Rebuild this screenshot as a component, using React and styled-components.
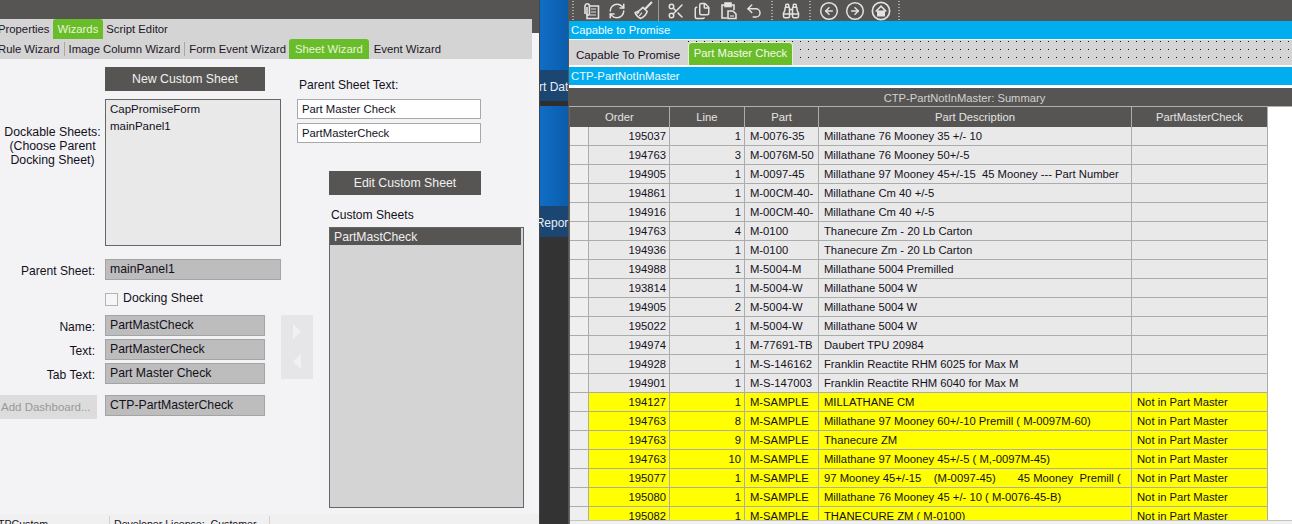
import React from "react";
import styled, { createGlobalStyle } from "styled-components";
import { RefreshCw, Scissors, Files, Undo2, Binoculars, CircleArrowLeft, CircleArrowRight } from "lucide-react";

const Global = createGlobalStyle`
  html, body { margin: 0; padding: 0; background: #fff; overflow: hidden; }
  #root { width: 1292px; height: 524px; overflow: hidden; }
  * { box-sizing: border-box; }
`;

const Page = styled.div`
  display: flex; width: 1292px; height: 524px; overflow: hidden;
  font-family: "Liberation Sans", Arial, sans-serif; font-size: 11.5px; color: #14101c;
`;

/* left window */
const LeftWindow = styled.div`
  width: 539px; flex: none; display: flex; flex-direction: column; background: #f3f3f5;
`;
const Upper = styled.div`display: flex; height: 514px;`;
const Main = styled.div`width: 532px; flex: none; display: flex; flex-direction: column;`;
const Gutter = styled.div`
  flex: 1; background: linear-gradient(#575553 33px, #f5f5f7 33px);
`;
const TitleBar = styled.div`height: 19px; background: #575553; flex: none;`;
const TabRow = styled.div`
  display: flex; align-items: stretch; flex: none; background: #d4d4d4; overflow: hidden;
  height: 20px; font-size: 11.3px;
`;
const WizardTab = styled.div`
  display: flex; align-items: center; white-space: nowrap; padding: 0 ${p => p.$pad || 3}px;
  margin-left: ${p => p.$ml || 0}px;
  background: ${p => (p.$active ? "#6abd2a" : "transparent")};
  color: ${p => (p.$active ? "#e6f5d6" : "#1c1626")};
  border-radius: ${p => (p.$active ? "3px 3px 0 0" : "0")};
`;
const TabSep = styled.span`width: 1px; background: #aba89f; margin: 3px 1px; flex: none;`;
const FormPane = styled.div`flex: 1; display: grid; grid-template-columns: 297px 1fr; background: #f3f3f5;`;
const FormLeft = styled.div`display: flex; flex-direction: column; padding-top: 8px;`;
const FormRight = styled.div`display: flex; flex-direction: column; padding-top: 19px;`;
const DarkButton = styled.div`
  display: flex; align-items: center; justify-content: center; flex: none;
  height: 24px; width: ${p => p.$w}px; margin-left: ${p => p.$ml}px; margin-top: ${p => p.$mt || 0}px;
  background: #575553; color: #f0f0f0; font-size: 12.3px;
`;
const DockRow = styled.div`display: flex; margin-top: 8px; align-items: flex-start;`;
const DockLabel = styled.div`
  width: 105px; flex: none; text-align: center; line-height: 14px; font-size: 12.3px; padding-top: 26px;
`;
const SheetList = styled.div`
  width: ${p => p.$w}px; height: ${p => p.$h}px; flex: none; border: 1px solid #666;
  background: ${p => p.$bg}; margin-left: ${p => p.$ml || 0}px; margin-top: ${p => p.$mt || 0}px; padding: ${p => p.$pad || 0};
`;
const ListItem = styled.div`height: 17px; line-height: 17px; padding-left: 4px; white-space: nowrap;`;
const SelectedItem = styled.div`
  height: 17px; line-height: 19px; padding-left: 4px; background: #575553; color: #eee; margin-right: 2px; font-size: 12.2px; overflow: hidden;
`;
const FieldRow = styled.div`display: flex; align-items: center; margin-top: ${p => p.$mt || 0}px;`;
const FieldLabel = styled.div`
  width: 95px; margin-right: 10px; flex: none; text-align: right; white-space: nowrap; padding-top: 3px; font-size: 12.1px;
`;
const ReadField = styled.div`
  width: ${p => p.$w}px; height: 21px; flex: none; background: #bdbdbd; border: 1px solid #a4a4a4;
  padding-left: 4px; line-height: 19px; font-size: 12.25px; white-space: nowrap;
`;
const CheckRow = styled.div`display: flex; align-items: flex-start; margin: 13px 0 0 105px; height: 13px;`;
const CheckBox = styled.div`width: 13px; height: 13px; border: 1px solid #b4b4b4; background: #f6f6f6; flex: none; margin-right: 5px;`;
const CheckText = styled.div`line-height: 11px; white-space: nowrap; font-size: 12.3px;`;
const NameBlock = styled.div`display: flex; margin-top: 9px;`;
const NameFields = styled.div`display: flex; flex-direction: column; gap: 3px; flex: none;`;
const MoveButtons = styled.div`
  width: 32px; height: 64px; flex: none; margin-left: 16px; background: #e6e6e8; padding: 9px 0 10px;
  display: flex; flex-direction: column; align-items: center; justify-content: space-between;
`;
const GhostButton = styled.div`
  width: 97px; height: 24px; flex: none; margin-right: 8px; background: #dcdcdc; color: #999;
  display: flex; align-items: center; padding-left: 1px; white-space: nowrap; align-self: flex-start;
`;
const DashRow = styled.div`display: flex; align-items: flex-start; margin-top: 11px;`;
const RightLabel = styled.div`height: 14px; line-height: 14px; margin-left: 2px; white-space: nowrap; font-size: 12.1px; margin-top: ${p => p.$mt || 0}px; padding-left: ${p => p.$pl || 0}px;`;
const TextInput = styled.div`
  width: 184px; height: 20px; background: #fff; border: 1px solid #a8a8a8; padding-left: 4px; font-size: 11.3px;
  line-height: 18px; margin-top: ${p => p.$mt}px;
`;
const StatusBar = styled.div`
  height: 10px; flex: none; background: #f0f0f0; display: flex; overflow: hidden; line-height: 16px; font-size: 10.6px;
`;
const StatusCell = styled.div`
  width: ${p => p.$w}px; flex: none; padding-left: ${p => p.$pl}px; margin-left: ${p => p.$ml || 0}px; white-space: pre;
  border-right: 1px solid #d0d0d0; margin-top: 2px;
`;

/* rail */
const Rail = styled.div`width: 30px; flex: none; display: flex; flex-direction: column; background: #333; border-left: 1px solid #444; border-right: 1px solid #555;`;
const RailBlue = styled.div`height: ${p => p.$h}px; flex: none; background: linear-gradient(90deg, #0f6ec6, #0c5cab);`;
const RailNav = styled.div`
  height: 31px; flex: none; background: #1b4672; color: #e8eef5; font-size: 12px; padding-top: 3px;
  display: flex; align-items: center; justify-content: center; white-space: nowrap;
  overflow: ${p => (p.$clip ? "hidden" : "visible")};
`;
const RailGap = styled.div`height: 5px; flex: none; background: #2e2e2e;`;
const RailText = styled.span`margin-left: ${p => p.$ml || 0}px; flex: none;`;

/* right window */
const RightWindow = styled.div`position: relative; flex: 1; display: flex; flex-direction: column; background: #fff; min-width: 0; font-size: 11.3px;`;
const Toolbar = styled.div`height: 21px; flex: none; background: #575553; display: flex; align-items: center; color: #e2e2e2;`;
const ToolIcon = styled.div`width: 26px; height: 21px; flex: none; display: flex; align-items: center; justify-content: center;`;
const Grip = styled.div`
  width: 2px; height: 19px; flex: none; margin: 0 ${p => p.$mr}px 0 ${p => p.$ml}px;
  background: repeating-linear-gradient(#a8a8a8 0 1px, transparent 1px 3px);
`;
const ToolSep = styled.div`width: 1px; height: 21px; background: #9a9a9a; flex: none; margin: 0 4px 0 2px;`;
const BlueBar = styled.div`
  height: 18px; flex: none; background: #00aeef; color: #f2fbff; line-height: 18px; padding-left: 2px;
  margin-bottom: ${p => p.$mb}px;
`;
const SheetTabs = styled.div`
  height: 25px; flex: none; background-color: #d4d4d4; display: flex; margin-bottom: 2px;
  background-image: conic-gradient(at 1px 1px, transparent 75%, #111 0);
  background-size: 8px 8px; background-position: 7px 1px;
`;
const PlainTab = styled.div`
  width: 119px; flex: none; background: #d4d4d4; line-height: 30px; padding-left: 7px; white-space: nowrap; font-size: 11.6px;
`;
const ActiveSheetTab = styled.div`
  width: 105px; flex: none; margin-top: 2px; background: #6abd2a; color: #f4fbec;
  border: 1px solid #e4f3d4; border-bottom: none; border-radius: 4px 4px 0 0; text-align: center; line-height: 20px; white-space: nowrap;
`;
const GridArea = styled.div`flex: 1; display: flex; flex-direction: column; min-height: 0; margin-top: 1px;`;
const GridTitle = styled.div`
  height: 19px; flex: none; background: #575553; color: #d2d2d2; line-height: 20px; text-align: center; padding-left: 68px;
  border-bottom: 1px solid #b0b0b0; font-size: 11.2px;
`;
const GridBody = styled.div`flex: 1; display: flex; flex-direction: column; min-height: 0; border-left: 1px solid #666; font-size: 11.25px;`;
const COLS = "19px 81px 75px 74px 313px 136px";
const LINE = "#acacac";
const HeadRow = styled.div`
  display: grid; grid-template-columns: ${COLS}; width: 698px; height: 20px; flex: none; background: #575553; color: #e4e4e4;
`;
const HeadCell = styled.div`
  text-align: center; line-height: 20px; border-right: 1px solid ${LINE}; border-bottom: 1px solid ${LINE};
  grid-column: span ${p => p.$span || 1};
`;
const Rows = styled.div`height: 393px; overflow: hidden; flex: none;`;
const Row = styled.div`
  display: grid; grid-template-columns: ${COLS}; width: 698px; height: 19px;
  background: ${p => (p.$warn ? "#ffff00" : "#e9e9e9")};
`;
const Selector = styled.div`background: #efefef; border-right: 1px solid ${LINE}; border-bottom: 1px solid ${LINE};`;
const Cell = styled.div`
  line-height: 18px; overflow: hidden; white-space: pre; border-right: 1px solid ${LINE}; border-bottom: 1px solid ${LINE};
  text-align: ${p => (p.$num ? "right" : "left")};
  padding: ${p => (p.$num ? "0 3px 0 0" : "0 0 0 5px")};
`;
const GridFoot = styled.div`flex: 1; background: #f0f0f0; border-top: 1px solid #c4c4c4;`;

const Triangle = ({ dir }) => (
  <svg width="8" height="15" viewBox="0 0 8 15"><polygon points={dir === "r" ? "0,0 8,7.500 0,15" : "8,0 0,7.500 8,15"} fill="#f1f1f3" /></svg>
);

const DocClip = () => (
  <svg width="18" height="18" viewBox="0 0 18 18" fill="none" stroke="currentColor" strokeWidth="1.6">
    <path d="M8 4h8.500v12.500H5v-5" /><path d="M9 7h5M9 10h5M8 13h6" strokeWidth="1.200" />
    <path d="M3 12V4a2.200 2.200 0 0 1 4.400 0v8a1.200 1.200 0 0 1-2.400 0V5" />
  </svg>
);
const Broom = () => (
  <svg width="19" height="19" viewBox="0 0 18 18" fill="none" stroke="currentColor" strokeWidth="1.500" strokeLinejoin="round">
    <path d="M17 1l-6.500 6.500" strokeWidth="2" />
    <path d="M8.500 6l4 4c-1 3-4 5.500-6 6.500C4 15.500 2 13.500 1 11c2.500-.5 5-2.500 7.500-5z" />
    <path d="M5 14l2.500-3M3 12l2-1.500" strokeWidth="1.100" />
  </svg>
);
const ClipDoc = () => (
  <svg width="18" height="18" viewBox="0 0 18 18" fill="none" stroke="currentColor" strokeWidth="1.600">
    <path d="M6 3H3v13h5" /><path d="M12 3h3v5" /><rect x="6" y="1" width="6" height="3.500" fill="currentColor" />
    <path d="M9 9h5l3 3v4.500H9z" fill="#575553" /><path d="M11 14h4" strokeWidth="1.100" />
  </svg>
);
const HomeCircle = () => (
  <svg width="20" height="20" viewBox="0 0 19 19" fill="none" stroke="currentColor" strokeWidth="1.600">
    <circle cx="9.500" cy="9.500" r="8.200" />
    <path d="M4.500 10l5-5 5 5" strokeWidth="1.600" /><path d="M6.500 9v5h6V9" fill="currentColor" />
  </svg>
);

const gray = [
  ["195037", "1", "M-0076-35", "Millathane 76 Mooney 35 +/- 10", ""],
  ["194763", "3", "M-0076M-50", "Millathane 76 Mooney 50+/-5", ""],
  ["194905", "1", "M-0097-45", "Millathane 97 Mooney 45+/-15  45 Mooney --- Part Number", ""],
  ["194861", "1", "M-00CM-40-", "Millathane Cm 40 +/-5", ""],
  ["194916", "1", "M-00CM-40-", "Millathane Cm 40 +/-5", ""],
  ["194763", "4", "M-0100", "Thanecure Zm - 20 Lb Carton", ""],
  ["194936", "1", "M-0100", "Thanecure Zm - 20 Lb Carton", ""],
  ["194988", "1", "M-5004-M", "Millathane 5004 Premilled", ""],
  ["193814", "1", "M-5004-W", "Millathane 5004 W", ""],
  ["194905", "2", "M-5004-W", "Millathane 5004 W", ""],
  ["195022", "1", "M-5004-W", "Millathane 5004 W", ""],
  ["194974", "1", "M-77691-TB", "Daubert TPU 20984", ""],
  ["194928", "1", "M-S-146162", "Franklin Reactite RHM 6025 for Max M", ""],
  ["194901", "1", "M-S-147003", "Franklin Reactite RHM 6040 for Max M", ""],
];
const NP = "Not in Part Master";
const warn = [
  ["194127", "1", "M-SAMPLE", "MILLATHANE CM", NP],
  ["194763", "8", "M-SAMPLE", "Millathane 97 Mooney 60+/-10 Premill ( M-0097M-60)", NP],
  ["194763", "9", "M-SAMPLE", "Thanecure ZM", NP],
  ["194763", "10", "M-SAMPLE", "Millathane 97 Mooney 45+/-5 ( M,-0097M-45)", NP],
  ["195077", "1", "M-SAMPLE", "97 Mooney 45+/-15    (M-0097-45)       45 Mooney  Premill (", NP],
  ["195080", "1", "M-SAMPLE", "Millathane 76 Mooney 45 +/- 10 ( M-0076-45-B)", NP],
  ["195082", "1", "M-SAMPLE", "THANECURE ZM ( M-0100)", NP],
];

const DataRow = ({ r, w }) => (
  <Row $warn={w}>
    <Selector />
    <Cell $num>{r[0]}</Cell>
    <Cell $num>{r[1]}</Cell>
    <Cell>{r[2]}</Cell>
    <Cell>{r[3]}</Cell>
    <Cell>{r[4]}</Cell>
  </Row>
);

const icon = { size: 18, strokeWidth: 2 };

export default function App() {
  return (
    <Page>
      <Global />
      <LeftWindow>
        <Upper>
          <Main>
            <TitleBar />
            <TabRow>
              <WizardTab $ml={-5}>Properties</WizardTab>
              <WizardTab $active $pad={5}>Wizards</WizardTab>
              <WizardTab>Script Editor</WizardTab>
            </TabRow>
            <TabRow>
              <WizardTab $ml={-5}>Rule Wizard</WizardTab>
              <TabSep />
              <WizardTab>Image Column Wizard</WizardTab>
              <TabSep />
              <WizardTab>Form Event Wizard</WizardTab>
              <WizardTab $active $pad={6}>Sheet Wizard</WizardTab>
              <WizardTab $ml={2}>Event Wizard</WizardTab>
            </TabRow>
            <FormPane>
              <FormLeft>
                <DarkButton $w={160} $ml={105}>New Custom Sheet</DarkButton>
                <DockRow>
                  <DockLabel>Dockable Sheets:<br />(Choose Parent<br />Docking Sheet)</DockLabel>
                  <SheetList $w={176} $h={147} $bg="#e9e9e9" $pad="1px 0 0">
                    <ListItem>CapPromiseForm</ListItem>
                    <ListItem>mainPanel1</ListItem>
                  </SheetList>
                </DockRow>
                <FieldRow $mt={13}>
                  <FieldLabel>Parent Sheet:</FieldLabel>
                  <ReadField $w={176}>mainPanel1</ReadField>
                </FieldRow>
                <CheckRow>
                  <CheckBox />
                  <CheckText>Docking Sheet</CheckText>
                </CheckRow>
                <NameBlock>
                  <NameFields>
                    <FieldRow>
                      <FieldLabel>Name:</FieldLabel>
                      <ReadField $w={160}>PartMastCheck</ReadField>
                    </FieldRow>
                    <FieldRow>
                      <FieldLabel>Text:</FieldLabel>
                      <ReadField $w={160}>PartMasterCheck</ReadField>
                    </FieldRow>
                    <FieldRow>
                      <FieldLabel>Tab Text:</FieldLabel>
                      <ReadField $w={160}>Part Master Check</ReadField>
                    </FieldRow>
                  </NameFields>
                  <MoveButtons>
                    <Triangle dir="r" />
                    <Triangle dir="l" />
                  </MoveButtons>
                </NameBlock>
                <DashRow>
                  <GhostButton>Add Dashboard...</GhostButton>
                  <ReadField $w={160}>CTP-PartMasterCheck</ReadField>
                </DashRow>
              </FormLeft>
              <FormRight>
                <RightLabel>Parent Sheet Text:</RightLabel>
                <TextInput $mt={7}>Part Master Check</TextInput>
                <TextInput $mt={4}>PartMasterCheck</TextInput>
                <DarkButton $w={152} $ml={32} $mt={28}>Edit Custom Sheet</DarkButton>
                <RightLabel $mt={13} $pl={32}>Custom Sheets</RightLabel>
                <SheetList $w={195} $h={281} $bg="#d4d4d4" $ml={32} $mt={5}>
                  <SelectedItem>PartMastCheck</SelectedItem>
                </SheetList>
              </FormRight>
            </FormPane>
          </Main>
          <Gutter />
        </Upper>
        <StatusBar>
          <StatusCell $w={112} $pl={0} $ml={-2}>TPCustom</StatusCell>
          <StatusCell $w={160} $pl={4}>Developer License:  Customer</StatusCell>
        </StatusBar>
      </LeftWindow>

      <Rail>
        <RailBlue $h={70} />
        <RailNav $clip><RailText $ml={-12}>Start Data</RailText></RailNav>
        <RailGap />
        <RailBlue $h={100} />
        <RailNav><RailText $ml={-4}>Repor</RailText></RailNav>
      </Rail>

      <RightWindow>
        <Toolbar>
          <Grip $ml={3} $mr={4} />
          <ToolIcon><DocClip /></ToolIcon>
          <ToolIcon><RefreshCw {...icon} /></ToolIcon>
          <ToolIcon><Broom /></ToolIcon>
          <ToolSep />
          <ToolIcon><Scissors {...icon} /></ToolIcon>
          <ToolIcon><Files {...icon} /></ToolIcon>
          <ToolIcon><ClipDoc /></ToolIcon>
          <ToolIcon><Undo2 {...icon} /></ToolIcon>
          <Grip $ml={4} $mr={5} />
          <ToolIcon><Binoculars {...icon} /></ToolIcon>
          <Grip $ml={5} $mr={5} />
          <ToolIcon><CircleArrowLeft size={20} strokeWidth={1.8} /></ToolIcon>
          <ToolIcon><CircleArrowRight size={20} strokeWidth={1.8} /></ToolIcon>
          <ToolIcon><HomeCircle /></ToolIcon>
          <Grip $ml={4} $mr={4} />
        </Toolbar>
        <BlueBar $mb={1}>Capable to Promise</BlueBar>
        <SheetTabs>
          <PlainTab>Capable To Promise</PlainTab>
          <ActiveSheetTab>Part Master Check</ActiveSheetTab>
        </SheetTabs>
        <BlueBar $mb={2}>CTP-PartNotInMaster</BlueBar>
        <GridArea>
          <GridTitle>CTP-PartNotInMaster: Summary</GridTitle>
          <GridBody>
            <HeadRow>
              <HeadCell $span={2}>Order</HeadCell>
              <HeadCell>Line</HeadCell>
              <HeadCell>Part</HeadCell>
              <HeadCell>Part Description</HeadCell>
              <HeadCell>PartMasterCheck</HeadCell>
            </HeadRow>
            <Rows>
              {gray.map((r, i) => <DataRow key={i} r={r} />)}
              {warn.map((r, i) => <DataRow key={i} r={r} w />)}
            </Rows>
            <GridFoot />
          </GridBody>
        </GridArea>
      </RightWindow>
    </Page>
  );
}
